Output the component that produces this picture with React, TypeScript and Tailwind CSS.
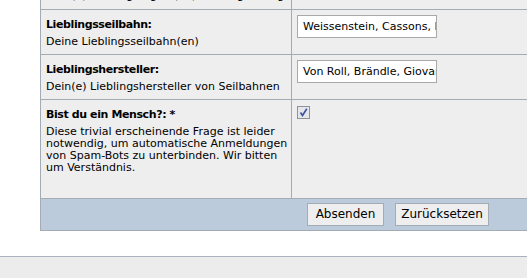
import React from "react";

const font = { fontFamily: '"DejaVu Sans", Verdana, sans-serif' };

function Checkbox() {
  return (
    <div className="w-[13px] h-[13px] border border-[#8e9296] bg-[#e4e6ea] flex items-center justify-center">
      <svg width="11" height="11" viewBox="0 0 11 11">
        <path d="M2.5 5.5 L4.5 8.5 L8.8 1.8" fill="none" stroke="#3a4fa0" strokeWidth="1.6" />
      </svg>
    </div>
  );
}

function TextInput({ value }: { value: string }) {
  return (
    <div className="w-[140px] h-[23px] border border-[#a9a9a9] bg-white overflow-hidden whitespace-nowrap pl-[5px] text-[11px] leading-[21px] text-black">
      {value}
    </div>
  );
}

const labelCls = "font-bold leading-[16px] text-[11px] tracking-[-0.4px]";
const descCls = "leading-[12px] mt-[3px] whitespace-nowrap text-[11px]";

export default function App() {
  return (
    <div className="w-[527px] h-[278px] overflow-hidden bg-white text-[11px] text-black" style={font}>
      <div className="pl-[40px] h-[256px] overflow-hidden">
        <div className="w-[489px] border-l border-r border-[#a3abb4]">
          {/* partial top row */}
          <div className="grid grid-cols-[251px_1fr] h-[9px] overflow-hidden bg-[#eeeeee]">
            <div className="border-r border-[#a3abb4] pl-[5px] relative">
              <div className="absolute left-[5px] top-[-10px] leading-[12px] whitespace-nowrap">
                Dein(e) Lieblingsregion(en) für Bergausflüge
              </div>
            </div>
            <div />
          </div>
          {/* Row 1 */}
          <div className="grid grid-cols-[251px_1fr] h-[45px] border-t border-[#a3abb4] bg-[#eeeeee]">
            <div className="border-r border-[#a3abb4] pl-[5px] pt-[7px]">
              <div className={labelCls}>Lieblingsseilbahn:</div>
              <div className={descCls}>Deine Lieblingsseilbahn(en)</div>
            </div>
            <div className="pl-[5px] pt-[5px]">
              <TextInput value="Weissenstein, Cassons, Kronberg" />
            </div>
          </div>
          {/* Row 2 */}
          <div className="grid grid-cols-[251px_1fr] h-[45px] border-t border-[#a3abb4] bg-[#eeeeee]">
            <div className="border-r border-[#a3abb4] pl-[5px] pt-[7px]">
              <div className={labelCls}>Lieblingshersteller:</div>
              <div className={descCls}>Dein(e) Lieblingshersteller von Seilbahnen</div>
            </div>
            <div className="pl-[5px] pt-[5px]">
              <TextInput value="Von Roll, Brändle, Giovanola" />
            </div>
          </div>
          {/* Row 3 */}
          <div className="grid grid-cols-[251px_1fr] h-[99px] border-t border-[#a3abb4] bg-[#eeeeee]">
            <div className="border-r border-[#a3abb4] pl-[5px] pt-[7px]">
              <div className={labelCls}>Bist du ein Mensch?: *</div>
              <div className={descCls}>
                Diese trivial erscheinende Frage ist leider
                <br />
                notwendig, um automatische Anmeldungen
                <br />
                von Spam-Bots zu unterbinden. Wir bitten
                <br />
                um Verständnis.
              </div>
            </div>
            <div className="pl-[5px] pt-[6px]">
              <Checkbox />
            </div>
          </div>
          {/* Footer */}
          <div className="h-[33px] border-t border-b border-[#a3abb4] bg-[#bccbdc] flex items-start pt-[4px] pl-[266px] gap-[11px]">
            <button className="w-[77px] h-[23px] border border-[#a3abb4] bg-[#eeeeee] text-[12px] text-black leading-[21px]" style={font}>
              Absenden
            </button>
            <button className="w-[94px] h-[23px] border border-[#a3abb4] bg-[#eeeeee] text-[12px] text-black leading-[21px]" style={font}>
              Zurücksetzen
            </button>
          </div>
        </div>
      </div>
      <div className="h-[22px] border-t border-[#a8b3bf] bg-[#ececec]" />
    </div>
  );
}
